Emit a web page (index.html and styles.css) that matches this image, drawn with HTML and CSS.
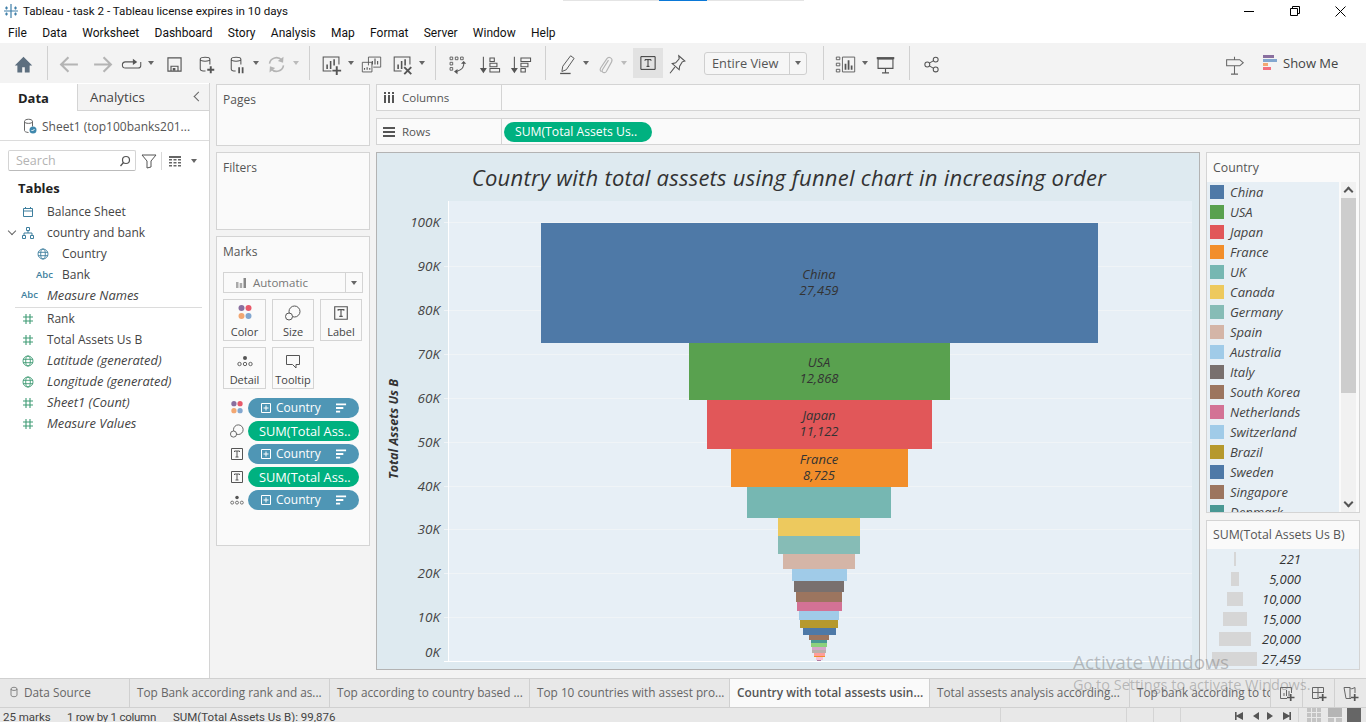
FILE: index.html
```html
<!DOCTYPE html>
<html lang="en">
<head>
<meta charset="utf-8">
<title>Tableau - task 2</title>
<link rel="stylesheet" href="styles.css">
</head>
<body>
<svg class="defs" aria-hidden="true">
  <symbol id="home" viewBox="0 0 24 24"><path fill="currentColor" d="M12 3 2 13h3v8h5.500v-6h3v6H19v-8h3z"/></symbol>
  <symbol id="back" viewBox="2 2 20 20"><path fill="none" stroke="currentColor" stroke-width="2" d="M20 12H4M11 5l-7 7 7 7"/></symbol>
  <symbol id="fwd" viewBox="2 2 20 20"><path fill="none" stroke="currentColor" stroke-width="2" d="M4 12h16M13 5l7 7-7 7"/></symbol>
  <symbol id="redo" viewBox="0 0 24 24"><path fill="none" stroke="currentColor" stroke-width="1.200" d="M14 9H4.500a3 3 0 0 0 0 7H19a3 3 0 0 0 3-3v-4"/><path fill="currentColor" d="M13 5.500 18 9l-5 3.500z"/></symbol>
  <symbol id="save" viewBox="0 0 24 24"><path fill="none" stroke="currentColor" stroke-width="1.300" d="M4.500 4.500h15v15h-15zM8 19v-5h8v5"/><path fill="currentColor" d="M10 16h3v3h-3z"/></symbol>
  <symbol id="dbadd" viewBox="0 0 24 24"><path fill="none" stroke="currentColor" stroke-width="1.200" d="M6 6c0-3 11-3 11 0v6M6 6c0 3 11 3 11 0M6 6v11c0 1.500 3 2.500 6 2.500"/><path fill="none" stroke="currentColor" stroke-width="2.200" d="M14 18h8M18 14v8"/></symbol>
  <symbol id="dbpause" viewBox="0 0 24 24"><path fill="none" stroke="currentColor" stroke-width="1.200" d="M6 6c0-3 11-3 11 0v6M6 6c0 3 11 3 11 0M6 6v11c0 1.500 2 2.500 5 2.500"/><path fill="none" stroke="currentColor" stroke-width="2" d="M15 15v7M19 15v7"/></symbol>
  <symbol id="refresh" viewBox="0 0 24 24"><path fill="none" stroke="currentColor" stroke-width="1.800" d="M4 11a8 8 0 0 1 14-4M20 13a8 8 0 0 1-14 4"/><path fill="currentColor" d="m20 3-.500 7-6-2zM4 21l.500-7 6 2z"/></symbol>
  <symbol id="sheetadd" viewBox="0 0 24 24"><path fill="none" stroke="currentColor" stroke-width="1.200" d="M12 19.500H2.500v-16h18V12"/><path fill="none" stroke="currentColor" stroke-width="1.800" d="M7 17v-5M11 17V8M15 13V6"/><path fill="none" stroke="currentColor" stroke-width="2.200" d="M13 19h10M18 14v10"/></symbol>
  <symbol id="sheetdup" viewBox="0 0 24 24"><path fill="none" stroke="currentColor" stroke-width="1" d="M8.500 13V3.500h14V15H14M1.500 9.500h11v11h-11z"/><path fill="none" stroke="currentColor" stroke-width="1.300" d="M13 12V8M16 12V5M19 12V8M4 18v-2M7 18v-3M10 18v-2"/></symbol>
  <symbol id="sheetx" viewBox="0 0 24 24"><path fill="none" stroke="currentColor" stroke-width="1.200" d="M11 19.500H2.500v-16h18V12"/><path fill="none" stroke="currentColor" stroke-width="1.800" d="M7 17v-5M11 17V8M15 13V6"/><path fill="none" stroke="currentColor" stroke-width="2.200" d="m14 15 8 8M22 15l-8 8"/></symbol>
  <symbol id="swap" viewBox="0 0 24 24"><g fill="none" stroke="currentColor" stroke-width="1"><path d="M3.500 3.500h3v3h-3zM9.500 3.500h3v3h-3zM15.500 3.500h3v3h-3zM3.500 9.500h3v3h-3zM3.500 15.500h3v3h-3z"/><path stroke-width="1.200" d="M19 9c1 5-1 9-8 11"/></g><path fill="currentColor" d="m16 11 3-3 3 3zM12 17v6l-4-3z"/></symbol>
  <symbol id="sortasc" viewBox="0 0 24 24"><path fill="none" stroke="currentColor" stroke-width="1.200" d="M5 3v16M12.500 4.500h5v4h-5zM12.500 10.500h8v4h-8zM12.500 16.500h11v4h-11z"/><path fill="currentColor" d="M1 16h8l-4 6z"/></symbol>
  <symbol id="sortdesc" viewBox="0 0 24 24"><path fill="none" stroke="currentColor" stroke-width="1.200" d="M5 3v16M12.500 4.500h11v4h-11zM12.500 10.500h8v4h-8zM12.500 16.500h5v4h-5z"/><path fill="currentColor" d="M1 16h8l-4 6z"/></symbol>
  <symbol id="pen" viewBox="0 0 24 24"><path fill="none" stroke="currentColor" stroke-width="1.100" d="m15 2 4 3-9 13-5 2 1-6z"/><path fill="currentColor" d="M3 21.500h12V23H3z"/></symbol>
  <symbol id="clip" viewBox="0 0 24 24"><path fill="none" stroke="currentColor" stroke-width="1.300" d="m16 7-7 11c-1.500 3 3 4.500 4.500 2l6-11c2-4-3-7-5.500-3.500L7 16c-1.500 3 .500 4 1 4"/></symbol>
  <symbol id="tbox" viewBox="0 0 24 24"><path fill="none" stroke="currentColor" stroke-width="1.300" d="M2.500 3.500h19v17h-19z"/><path fill="none" stroke="currentColor" stroke-width="1.300" d="M8 9V7.500h8V9M12 7.500v9M10 16.500h4"/></symbol>
  <symbol id="pin" viewBox="0 0 24 24"><path fill="none" stroke="currentColor" stroke-width="1.200" d="m14 2 7 6-3 1-3 5-.500 4-8-7 4-1 4-4.500zM9.500 15 4 22"/></symbol>
  <symbol id="showme" viewBox="0 0 24 24"><g fill="none" stroke="currentColor" stroke-width="1"><path d="M1.500 3.500h4v3h-4zM1.500 10.500h4v3h-4zM1.500 17.500h4v3h-4zM8.500 3.500h14v17h-14z"/></g><path fill="currentColor" d="M11 11h2v7h-2zM14.500 7h2v11h-2zM18 13h2v5h-2z"/></symbol>
  <symbol id="present" viewBox="0 0 24 24"><path fill="none" stroke="currentColor" stroke-width="1.300" d="M3.500 5.500h17v11h-17zM12 16.500v5M8 21.500h8"/><path fill="currentColor" d="M2 3.500h20V6H2z"/></symbol>
  <symbol id="share" viewBox="-3 -3 30 30"><g fill="none" stroke="currentColor" stroke-width="1.500"><circle cx="6" cy="12" r="3.500"/><circle cx="18" cy="5" r="3.500"/><circle cx="18" cy="19" r="3.500"/><path d="m9 10 6-3.500M9 14l6 3.500"/></g></symbol>
  <symbol id="sign" viewBox="0 0 24 24"><path fill="none" stroke="currentColor" stroke-width="1.200" d="M3 6.500h15l4 3.500-4 3.500H3zM12 3v3.500M12 13.500V23M8 23h8"/></symbol>
  <symbol id="bars" viewBox="0 0 16 16"><path fill="#8a6f9f" d="M1 0h11v3H1z"/><path fill="#83a7cf" d="M1 4h14v3H1z"/><path fill="#f2a772" d="M1 8h5v3H1z"/><path fill="#f2707f" d="M1 12h8v3H1z"/></symbol>
  <symbol id="dbok" viewBox="0 0 16 16"><path fill="none" stroke="#666" d="M2.500 3.500c0-3 8-3 8 0v5M2.500 3.500c0 2.500 8 2.500 8 0M2.500 3.500v9c0 1 1.500 1.800 4 2"/><circle cx="11" cy="12" r="3.500" fill="#3f88ad"/><path fill="none" stroke="#fff" d="m9.500 12 1 1 2-2"/></symbol>
  <symbol id="db" viewBox="0 0 16 16"><path fill="none" stroke="#666" d="M4 4c0-3 8-3 8 0v8c0 3-8 3-8 0zM4 4c0 2.500 8 2.500 8 0"/></symbol>
  <symbol id="funnel" viewBox="0 0 16 16"><path fill="none" stroke="#555" d="M1 2h14L10 8v6l-4 1V8z"/></symbol>
  <symbol id="lens" viewBox="0 0 12 12"><circle cx="7" cy="5" r="3.500" fill="none" stroke="#555" stroke-width="1.200"/><path stroke="#555" stroke-width="1.300" d="M4.500 7.500 1.500 11"/></symbol>
  <symbol id="cols" viewBox="0 0 14 12"><path fill="#666" d="M1 1h12v2H1zM1 4h3v1.500H1zM5.500 4h3v1.500h-3zM10 4h3v1.500h-3zM1 7h3v1.500H1zM5.500 7h3v1.500h-3zM10 7h3v1.500h-3zM1 10h3v1.500H1zM5.500 10h3v1.500h-3zM10 10h3v1.500h-3z"/></symbol>
  <symbol id="shcols" viewBox="0 0 12 11"><path fill="#555" d="M1 0h2v2H1zM5 0h2v2H5zM9 0h2v2H9zM1 3h2v8H1zM5 3h2v8H5zM9 3h2v8H9z"/></symbol>
  <symbol id="cal" viewBox="0 0 12 12"><path fill="none" stroke="#3e7f9e" d="M1.500 2.500h9v8h-9zM1.500 5h9M3.500 1v2M8.500 1v2"/></symbol>
  <symbol id="tree" viewBox="0 0 12 12"><path fill="none" stroke="#3e7f9e" d="M4.500 .5h3v3h-3zM.5 8.500h3v3h-3zM8.500 8.500h3v3h-3zM6 3.500V6M2 8.500V6h8v2.500"/></symbol>
  <symbol id="globe" viewBox="0 0 12 12"><g fill="none" stroke="currentColor" stroke-width=".9"><circle cx="6" cy="6" r="5"/><ellipse cx="6" cy="6" rx="2.300" ry="5"/><path d="M1 4.300h10M1 7.700h10"/></g></symbol>
  <symbol id="hash" viewBox="0 0 10 10"><path fill="none" stroke="#3f9b74" stroke-width="1.100" d="M3 0v10M7 0v10M0 3h10M0 7h10"/></symbol>
  <symbol id="dots" viewBox="0 0 16 16"><path fill="#8a6f9f" d="M4.500 0a3 3 0 1 0 0 6 3 3 0 0 0 0-6z"/><path fill="#e8596a" d="M11.500 0a3 3 0 1 0 0 6 3 3 0 0 0 0-6z"/><path fill="#f2a772" d="M4.500 8a3 3 0 1 0 0 6 3 3 0 0 0 0-6z"/><path fill="#83a7cf" d="M11.500 8a3 3 0 1 0 0 6 3 3 0 0 0 0-6z"/></symbol>
  <symbol id="size" viewBox="0 0 16 16"><g fill="none" stroke="#555"><circle cx="9.500" cy="6.500" r="5.500"/><circle cx="4" cy="11.500" r="3.500" fill="#fafafa"/></g></symbol>
  <symbol id="detail" viewBox="0 0 16 16"><g fill="none" stroke="#555" stroke-width=".9"><circle cx="2.500" cy="11" r="1.700"/><circle cx="8" cy="11" r="1.700"/><circle cx="13.500" cy="11" r="1.700"/></g><circle cx="8" cy="5" r="2" fill="#555"/></symbol>
  <symbol id="tip" viewBox="0 0 16 16"><path fill="none" stroke="#555" d="M1.500 2.500h13v9H11V15l-3.500-3.500h-6z"/></symbol>
  <symbol id="t" viewBox="0 0 14 14"><path fill="none" stroke="#555" d="M1.500 1.500h11v11h-11z"/><path fill="none" stroke="#555" d="M4.500 5V4h5v1M7 4v6M5.500 10h3"/></symbol>
  <symbol id="autobars" viewBox="0 0 12 12"><path fill="#aaa" d="M1 5h2.500v6H1zM4.700 6h2.500v5H4.700z"/><path fill="#888" d="M8.500 1H11v10H8.500z"/></symbol>
  <symbol id="plusbox" viewBox="0 0 10 10"><path fill="none" stroke="#fff" d="M.5.500h9v9h-9zM5 2.500v5M2.500 5h5"/></symbol>
  <symbol id="sortpill" viewBox="0 0 12 12"><path fill="#fff" d="M0 1h11v2H0zM0 5h8v2H0zM0 9h4.500v2H0z"/></symbol>
  <symbol id="tabsheet" viewBox="0 0 16 16"><path fill="none" stroke="#666" d="M8 13.500H1.500v-11h11V8"/><path stroke="#666" d="M5 11V8M7.500 11V5M10 11V6"/><path stroke="#555" stroke-width="1.700" d="M8 12.500h7.500M11.700 9v7.500"/></symbol>
  <symbol id="tabdash" viewBox="0 0 16 16"><path fill="none" stroke="#666" d="M8 13.500H1.500v-11h11V8M1.500 7.500h11M7 2.500v11"/><path stroke="#555" stroke-width="1.700" d="M8 12.500h7.500M11.700 9v7.500"/></symbol>
  <symbol id="tabstory" viewBox="0 0 16 16"><path fill="none" stroke="#666" d="M8 13.500H3l-2-11h6l1.500 1.500 3.500-1.500V8M7 2.500v11"/><path stroke="#555" stroke-width="1.700" d="M8 12.500h7.500M11.700 9v7.500"/></symbol>
  <symbol id="gridview" viewBox="0 0 14 14"><path fill="#c3c3c3" d="M0 0h4v4H0zM5 0h4v4H5zM10 0h4v4h-4zM0 5h4v4H0zM5 5h4v4H5zM10 5h4v4h-4zM0 10h4v4H0zM5 10h4v4H5zM10 10h4v4h-4z"/></symbol>
  <symbol id="midview" viewBox="0 0 14 14"><path fill="#b5b5b5" d="M0 0h14v9H0z"/><path fill="#c3c3c3" d="M0 10h6v4H0zM8 10h6v4H8z"/></symbol>
</svg>

<header class="titlebar">
  <svg class="applogo" viewBox="0 0 16 16"><g stroke="#3f7fa8" stroke-width="1.200"><path d="M8 1v14M1 8h14"/><path d="M3.500 3.500v3M2 5h3M12.500 3.500v3M11 5h3M3.500 9.500v3M2 11h3M12.500 9.500v3M11 11h3"/></g></svg>
  <span class="apptitle">Tableau - task 2 - Tableau license expires in 10 days</span>
  <div class="winbtns">
    <svg class="winbtn" viewBox="0 0 46 21"><path stroke="#000" d="M16 10.500h10"/></svg>
    <svg class="winbtn" viewBox="0 0 46 21"><path fill="none" stroke="#000" d="M16.500 7.500h7v7h-7zM18.500 7.500v-2h7v7h-2"/></svg>
    <svg class="winbtn" viewBox="0 0 46 21"><path fill="none" stroke="#000" d="m15.500 5.500 10 10M25.500 5.500l-10 10"/></svg>
  </div>
</header>
<div class="progress"><span class="progress-on"></span></div>

<nav class="menubar">
  <span>File</span><span>Data</span><span>Worksheet</span><span>Dashboard</span><span>Story</span><span>Analysis</span><span>Map</span><span>Format</span><span>Server</span><span>Window</span><span>Help</span>
</nav>

<div class="toolbar">
  <svg class="ti home"><use href="#home"/></svg>
  <i class="sep"></i>
  <svg class="ti off"><use href="#back"/></svg>
  <svg class="ti off m2"><use href="#fwd"/></svg>
  <svg class="ti n"><use href="#redo"/></svg>
  <i class="car m1"></i>
  <svg class="ti m3"><use href="#save"/></svg>
  <svg class="ti"><use href="#dbadd"/></svg>
  <svg class="ti"><use href="#dbpause"/></svg>
  <i class="car"></i>
  <svg class="ti off"><use href="#refresh"/></svg>
  <i class="car off"></i>
  <i class="sep"></i>
  <svg class="ti"><use href="#sheetadd"/></svg>
  <i class="car"></i>
  <svg class="ti"><use href="#sheetdup"/></svg>
  <svg class="ti"><use href="#sheetx"/></svg>
  <i class="car"></i>
  <i class="sep"></i>
  <svg class="ti"><use href="#swap"/></svg>
  <svg class="ti m1"><use href="#sortasc"/></svg>
  <svg class="ti"><use href="#sortdesc"/></svg>
  <i class="sep s9"></i>
  <svg class="ti n m2"><use href="#pen"/></svg>
  <i class="car"></i>
  <svg class="ti n off"><use href="#clip"/></svg>
  <i class="car off m1"></i>
  <span class="tactive"><svg class="ti n"><use href="#tbox"/></svg></span>
  <svg class="ti n"><use href="#pin"/></svg>
  <div class="fit"><span class="fit-label">Entire View</span><span class="fit-drop"><i class="car"></i></span></div>
  <i class="sep s16"></i>
  <svg class="ti"><use href="#showme"/></svg>
  <i class="car"></i>
  <svg class="ti"><use href="#present"/></svg>
  <i class="sep"></i>
  <svg class="ti"><use href="#share"/></svg>
  <svg class="ti sign"><use href="#sign"/></svg>
  <div class="showme"><svg class="showme-ic"><use href="#bars"/></svg><span>Show Me</span></div>
</div>

<main class="workspace">
  <aside class="sidebar">
    <div class="sidetabs">
      <span class="sidetab on">Data</span>
      <span class="sidetab">Analytics<b class="collapse"></b></span>
    </div>
    <div class="source"><svg class="src-ic"><use href="#dbok"/></svg><span>Sheet1 (top100banks201...</span></div>
    <div class="searchrow">
      <div class="searchbox"><span>Search</span><svg class="lens"><use href="#lens"/></svg></div>
      <svg class="filt"><use href="#funnel"/></svg>
      <i class="vline"></i>
      <svg class="gridic"><use href="#cols"/></svg>
      <i class="car"></i>
    </div>
    <h2 class="tables">Tables</h2>
    <ul class="fields">
      <li><svg class="fi"><use href="#cal"/></svg>Balance Sheet</li>
      <li><b class="chev"></b><svg class="fi"><use href="#tree"/></svg>country and bank</li>
      <li class="ind"><svg class="fi blue"><use href="#globe"/></svg>Country</li>
      <li class="ind"><span class="abc">Abc</span>Bank</li>
      <li class="em"><span class="abc">Abc</span>Measure Names</li>
    </ul>
    <hr class="fieldsep">
    <ul class="fields">
      <li><svg class="fi hash"><use href="#hash"/></svg>Rank</li>
      <li><svg class="fi hash"><use href="#hash"/></svg>Total Assets Us B</li>
      <li class="em"><svg class="fi green"><use href="#globe"/></svg>Latitude (generated)</li>
      <li class="em"><svg class="fi green"><use href="#globe"/></svg>Longitude (generated)</li>
      <li class="em"><svg class="fi hash"><use href="#hash"/></svg>Sheet1 (Count)</li>
      <li class="em"><svg class="fi hash"><use href="#hash"/></svg>Measure Values</li>
    </ul>
  </aside>

  <section class="cards">
    <div class="card pages"><h3>Pages</h3></div>
    <div class="card filters"><h3>Filters</h3></div>
    <div class="card marks">
      <h3>Marks</h3>
      <div class="marktype"><svg class="autoic"><use href="#autobars"/></svg><span class="mt-label">Automatic</span><span class="mt-drop"><i class="car"></i></span></div>
      <div class="markgrid">
        <div class="mbtn"><svg><use href="#dots"/></svg>Color</div>
        <div class="mbtn"><svg><use href="#size"/></svg>Size</div>
        <div class="mbtn"><svg><use href="#t"/></svg>Label</div>
        <div class="mbtn"><svg><use href="#detail"/></svg>Detail</div>
        <div class="mbtn"><svg><use href="#tip"/></svg>Tooltip</div>
      </div>
      <div class="mrow"><svg class="mic"><use href="#dots"/></svg><span class="pill blue-p"><svg class="pb"><use href="#plusbox"/></svg>Country<svg class="ps"><use href="#sortpill"/></svg></span></div>
      <div class="mrow"><svg class="mic"><use href="#size"/></svg><span class="pill green-p">SUM(Total Ass..</span></div>
      <div class="mrow"><svg class="mic"><use href="#t"/></svg><span class="pill blue-p"><svg class="pb"><use href="#plusbox"/></svg>Country<svg class="ps"><use href="#sortpill"/></svg></span></div>
      <div class="mrow"><svg class="mic"><use href="#t"/></svg><span class="pill green-p">SUM(Total Ass..</span></div>
      <div class="mrow"><svg class="mic"><use href="#detail"/></svg><span class="pill blue-p"><svg class="pb"><use href="#plusbox"/></svg>Country<svg class="ps"><use href="#sortpill"/></svg></span></div>
    </div>
  </section>

  <section class="stage">
    <div class="shelf"><div class="shelf-head"><svg class="sh-ic"><use href="#shcols"/></svg>Columns</div></div>
    <div class="shelf"><div class="shelf-head"><span class="rows-ic"><i></i><i></i><i></i></span>Rows</div><span class="shelfpill">SUM(Total Assets Us..</span></div>
    <div class="lower">
      <div class="view">
        <div class="viewtitle">Country with total asssets using funnel chart in increasing order</div>
        <svg class="chart" viewBox="377 201 822 468">
          <rect class="plot" x="448" y="201" width="744" height="460"/>
          <g class="grid">
            <path d="M444 222.500H1192M444 266.500H1192M444 310.500H1192M444 354.500H1192M444 398.500H1192M444 442.500H1192M444 486.500H1192M444 529.500H1192M444 573.500H1192M444 617.500H1192"/>
            <path class="axis" d="M448.500 201V661M444 661.500H1192"/>
          </g>
          <g class="ticks">
            <text x="440" y="227">100K</text><text x="440" y="271">90K</text><text x="440" y="315">80K</text><text x="440" y="359">70K</text><text x="440" y="403">60K</text><text x="440" y="447">50K</text><text x="440" y="491">40K</text><text x="440" y="534">30K</text><text x="440" y="578">20K</text><text x="440" y="622">10K</text><text x="440" y="657">0K</text>
          </g>
          <text class="ytitle" transform="translate(398 429) rotate(-90)">Total Assets Us B</text>
          <g class="bars" shape-rendering="crispEdges">
            <rect x="541" y="223" width="557" height="120" fill="#4e79a7"/>
            <rect x="689" y="343" width="261" height="57" fill="#59a14f"/>
            <rect x="707" y="400" width="225" height="49" fill="#e15759"/>
            <rect x="731" y="449" width="177" height="38" fill="#f28e2b"/>
            <rect x="747" y="487" width="144" height="31" fill="#76b7b2"/>
            <rect x="778" y="518" width="82" height="18" fill="#edc95e"/>
            <rect x="778" y="536" width="82" height="18" fill="#86bcb6"/>
            <rect x="783" y="554" width="72" height="15" fill="#d4b5a7"/>
            <rect x="792" y="569" width="55" height="12" fill="#a0cbe8"/>
            <rect x="794" y="581" width="50" height="11" fill="#79706e"/>
            <rect x="796" y="592" width="46" height="10" fill="#9c755f"/>
            <rect x="797" y="602" width="45" height="9" fill="#d37295"/>
            <rect x="799" y="611" width="40" height="9" fill="#a0cbe8"/>
            <rect x="800" y="620" width="38" height="8" fill="#b6992d"/>
            <rect x="803" y="628" width="33" height="7" fill="#4e79a7"/>
            <rect x="809" y="635" width="20" height="5" fill="#9c755f"/>
            <rect x="811" y="640" width="16" height="3" fill="#499894"/>
            <rect x="811" y="643" width="16" height="4" fill="#8cd17d"/>
            <rect x="812" y="647" width="14" height="3" fill="#d4a6c8"/>
            <rect x="812" y="650" width="14" height="3" fill="#bab0ac"/>
            <rect x="814" y="653" width="11" height="3" fill="#ff9d9a"/>
            <rect x="814" y="656" width="11" height="1" fill="#f28e2b"/>
            <rect x="816" y="657" width="7" height="3" fill="#fabfd2"/>
            <rect x="817" y="660" width="4" height="1" fill="#b07aa1"/>
          </g>
          <g class="labels">
            <text x="819" y="279">China</text><text x="819" y="295">27,459</text>
            <text x="819" y="367">USA</text><text x="819" y="383">12,868</text>
            <text x="819" y="420">Japan</text><text x="819" y="436">11,122</text>
            <text x="819" y="464">France</text><text x="819" y="480">8,725</text>
          </g>
        </svg>
      </div>
      <div class="legends">
        <div class="legend colorleg">
          <h4>Country</h4>
          <div class="legbody">
            <ul class="leglist">
              <li><i class="sw" style="background:#4e79a7"></i>China</li>
              <li><i class="sw" style="background:#59a14f"></i>USA</li>
              <li><i class="sw" style="background:#e15759"></i>Japan</li>
              <li><i class="sw" style="background:#f28e2b"></i>France</li>
              <li><i class="sw" style="background:#76b7b2"></i>UK</li>
              <li><i class="sw" style="background:#edc95e"></i>Canada</li>
              <li><i class="sw" style="background:#86bcb6"></i>Germany</li>
              <li><i class="sw" style="background:#d4b5a7"></i>Spain</li>
              <li><i class="sw" style="background:#a0cbe8"></i>Australia</li>
              <li><i class="sw" style="background:#79706e"></i>Italy</li>
              <li><i class="sw" style="background:#9c755f"></i>South Korea</li>
              <li><i class="sw" style="background:#d37295"></i>Netherlands</li>
              <li><i class="sw" style="background:#a0cbe8"></i>Switzerland</li>
              <li><i class="sw" style="background:#b6992d"></i>Brazil</li>
              <li><i class="sw" style="background:#4e79a7"></i>Sweden</li>
              <li><i class="sw" style="background:#9c755f"></i>Singapore</li>
              <li><i class="sw" style="background:#499894"></i>Denmark</li>
            </ul>
            <div class="scroll"><b class="up"></b><span class="thumb"></span><b class="down"></b></div>
          </div>
        </div>
        <div class="legend sizeleg">
          <h4>SUM(Total Assets Us B)</h4>
          <ul class="sizelist">
            <li><span class="sb-wrap"><i class="sb" style="width:2px"></i></span><span class="sv">221</span></li>
            <li><span class="sb-wrap"><i class="sb" style="width:8px"></i></span><span class="sv">5,000</span></li>
            <li><span class="sb-wrap"><i class="sb" style="width:16px"></i></span><span class="sv">10,000</span></li>
            <li><span class="sb-wrap"><i class="sb" style="width:24px"></i></span><span class="sv">15,000</span></li>
            <li><span class="sb-wrap"><i class="sb" style="width:32px"></i></span><span class="sv">20,000</span></li>
            <li><span class="sb-wrap"><i class="sb" style="width:45px"></i></span><span class="sv">27,459</span></li>
          </ul>
        </div>
      </div>
    </div>
  </section>
</main>

<div class="tabbar">
  <div class="tabs">
    <span class="tab ds"><svg class="tab-db"><use href="#db"/></svg>Data Source</span>
    <span class="tab">Top Bank according rank and as...</span>
    <span class="tab">Top according to country based ...</span>
    <span class="tab">Top 10 countries with assest pro...</span>
    <span class="tab active">Country with total assests usin...</span>
    <span class="tab">Total assests analysis according...</span>
    <span class="tab">Top bank according to total assets</span>
  </div>
  <span class="tabbtn"><svg><use href="#tabsheet"/></svg></span>
  <span class="tabbtn"><svg><use href="#tabdash"/></svg></span>
  <span class="tabbtn"><svg><use href="#tabstory"/></svg></span>
</div>

<footer class="status">
  <span class="st a">25 marks</span>
  <span class="st b">1 row by 1 column</span>
  <span class="st c">SUM(Total Assets Us B): 99,876</span>
  <i class="stsep"></i><i class="stcell"></i><i class="stcell"></i><i class="stcell"></i>
  <div class="nav">
    <span class="n-first"></span><span class="n-prev"></span><span class="n-next"></span><span class="n-last"></span>
  </div>
  <div class="viewsw">
    <svg><use href="#gridview"/></svg>
    <svg><use href="#midview"/></svg>
    <b class="full"></b>
  </div>
</footer>

<div class="watermark"><p class="wm1">Activate Windows</p><p class="wm2">Go to Settings to activate Windows.</p></div>
</body>
</html>
```

FILE: styles.css
```css
* { box-sizing: border-box; }
html, body { margin: 0; padding: 0; }
body {
  width: 1366px; height: 722px; overflow: hidden;
  display: flex; flex-direction: column;
  font-family: "Open Sans", "Noto Sans", sans-serif;
  font-size: 12px; color: #444; background: #fff;
  position: relative;
}
.defs { position: absolute; width: 0; height: 0; overflow: hidden; }
ul { list-style: none; margin: 0; padding: 0; }
h2, h3, h4, p { margin: 0; font-weight: normal; }
i, b { display: block; }

.titlebar { height: 22px; display: flex; align-items: center; background: #fff; flex: none; }
.applogo { width: 16px; height: 16px; margin: 0 0 0 3px; }
.apptitle { margin-left: 4px; font-family: Roboto, sans-serif; font-size: 11.600px; color: #111; }
.winbtns { margin-left: auto; display: flex; }
.winbtn { width: 46px; height: 21px; }
.progress { position: absolute; left: 563px; top: 0; width: 241px; height: 1px; background: #e4e4e4; }
.progress-on { display: block; width: 48px; height: 1px; margin-left: 96px; background: #0a78d7; }

.menubar { height: 21px; flex: none; display: flex; align-items: center; padding-left: 8px; gap: 15.300px; font-family: Roboto, sans-serif; font-size: 12px; color: #111; background: #fff; }

.toolbar { height: 40px; flex: none; display: flex; align-items: center; padding-left: 8px; background: #f3f3f3; color: #555; }
.ti { width: 31px; height: 21px; margin-top: 2px; flex: none; color: #555; }
.ti.n { width: 28px; }
.ti.off { color: #b4b4b4; }
.ti.home { color: #5d6f7f; }
.car { width: 9px; height: 4px; flex: none; position: relative; }
.car::after { content: ""; position: absolute; left: 1px; top: 0; border: 3.5px solid transparent; border-top: 4px solid #666; border-bottom: 0; }
.car.off::after { border-top-color: #bbb; }
.sep { width: 1px; height: 34px; background: #d0d0d0; margin: 0 6px 0 8px; flex: none; }
.sep.s9 { margin-left: 9px; }
.sep.s16 { margin-left: 16px; }
.m1 { margin-left: 1px; }
.m2 { margin-left: 2px; }
.m3 { margin-left: 3px; }
.tactive { width: 30px; height: 30px; margin-left: 4px; background: #e2e2e2; display: flex; align-items: center; justify-content: center; flex: none; }
.tactive .ti { width: 20px; height: 18px; margin-top: 0; color: #333; }
.fit { margin-left: 13px; width: 103px; height: 23px; border: 1px solid #cfcfcf; border-radius: 3px; display: flex; align-items: center; background: #f6f6f6; flex: none; }
.fit-label { width: 84px; padding-left: 7px; font-size: 12.800px; color: #555; white-space: nowrap; }
.fit-drop { flex: 1; height: 100%; border-left: 1px solid #cfcfcf; display: flex; align-items: center; justify-content: center; }
.ti.sign { margin-left: auto; color: #666; }
.showme { display: flex; align-items: center; margin-left: 12px; width: 104px; font-size: 13px; color: #444; }
.showme-ic { width: 16px; height: 16px; margin-right: 5px; }

.workspace { height: 595px; flex: none; display: flex; background: #f3f3f3; }
.sidebar { width: 210px; flex: none; background: #fff; border-right: 1px solid #d4d4d4; }
.sidetabs { height: 28px; margin-top: 1px; display: flex; }
.sidetab { height: 27px; display: flex; align-items: center; font-size: 13.300px; color: #444; background: #f3f3f3; border-bottom: 1px solid #d4d4d4; border-left: 1px solid #d4d4d4; flex: 1; padding-left: 12px; position: relative; }
.sidetab.on { flex: none; width: 77px; background: #fff; border: 0; font-size: 13px; font-weight: 700; color: #222; padding-left: 18px; }
.collapse { position: absolute; right: 7px; top: 9px; width: 7px; height: 7px; border-left: 1px solid #666; border-bottom: 1px solid #666; transform: rotate(45deg); }
.source { height: 29px; display: flex; align-items: center; padding-left: 22px; border-bottom: 1px solid #dcdcdc; color: #555; font-size: 12px; white-space: nowrap; }
.src-ic { width: 16px; height: 16px; margin-right: 4px; }
.searchrow { height: 21px; margin-top: 9px; display: flex; align-items: center; padding-left: 8px; }
.searchbox { width: 128px; height: 21px; border: 1px solid #d4d4d4; border-bottom-color: #bbb; border-radius: 2px; display: flex; align-items: center; justify-content: space-between; padding: 0 4px 0 7px; color: #b3b3b3; font-size: 12.500px; }
.lens { width: 12px; height: 12px; }
.filt { width: 16px; height: 16px; margin-left: 5px; }
.vline { width: 1px; height: 18px; background: #d8d8d8; margin-left: 4px; }
.gridic { width: 14px; height: 12px; margin: 0 8px 0 6px; }
.tables { margin: 7px 0 2px 18px; height: 21px; line-height: 21px; font-size: 13px; font-weight: 700; color: #222; }
.fields li { height: 21px; display: flex; align-items: center; padding-left: 47px; color: #444; font-size: 12px; position: relative; white-space: nowrap; }
.fields li.ind { padding-left: 62px; }
.fields li.em { font-style: italic; font-size: 12.900px; padding-bottom: 2px; }
.fi { position: absolute; left: 22px; top: 5px; width: 12px; height: 12px; }
.ind .fi { left: 37px; }
.fi.blue { color: #3e7f9e; }
.fi.green { color: #3f9b74; }
.fi.hash { width: 10px; height: 10px; left: 23px; top: 6px; }
.abc { position: absolute; left: 21px; font-size: 9.500px; font-weight: 600; font-style: normal; color: #3e7f9e; }
.ind .abc { left: 36px; }
.chev { position: absolute; left: 9px; top: 6px; width: 6px; height: 6px; border-right: 1px solid #666; border-bottom: 1px solid #666; transform: rotate(45deg); }
.fieldsep { margin: 1px 7px 0 15px; height: 1px; border: 0; background: #dcdcdc; }

.cards { width: 154px; margin: 1px 0 0 6px; flex: none; display: flex; flex-direction: column; gap: 6px; }
.card { border: 1px solid #d4d4d4; background: #fafafa; padding: 7px 6px 0; }
.card h3 { font-size: 12px; color: #555; line-height: 16px; }
.pages { height: 62px; }
.filters { height: 78px; }
.marks { height: 310px; }
.marktype { height: 21px; margin-top: 12px; border: 1px solid #d4d4d4; display: flex; align-items: center; width: 140px; }
.autoic { width: 12px; height: 12px; margin-left: 11px; }
.mt-label { margin-left: 6px; font-size: 11.500px; color: #777; width: 92px; }
.mt-drop { flex: 1; height: 100%; border-left: 1px solid #d4d4d4; display: flex; align-items: center; justify-content: center; }
.markgrid { margin-top: 6px; display: grid; grid-template-columns: 43px 42px 42px; grid-auto-rows: 42px; column-gap: 6px; row-gap: 6px; }
.mbtn { border: 1px solid #d4d4d4; display: flex; flex-direction: column; align-items: center; font-size: 11px; color: #444; padding-top: 5px; line-height: 16px; white-space: nowrap; }
.mbtn svg { width: 16px; height: 16px; margin-bottom: 3px; }
.mrow { height: 20px; margin-top: 3px; display: flex; align-items: center; }
.markgrid + .mrow { margin-top: 9px; }
.mic { width: 14px; height: 14px; margin-left: 7px; flex: none; }
.pill { margin-left: 4px; width: 111px; height: 20px; border-radius: 10px; color: #fff; font-size: 12px; display: flex; align-items: center; white-space: nowrap; padding-bottom: 1px; }
.blue-p { background: #4f96b5; padding-left: 13px; }
.green-p { background: #00b180; padding-left: 11px; font-size: 12.800px; }
.pb { width: 10px; height: 10px; margin-right: 5px; }
.ps { width: 11px; height: 12px; margin-left: auto; margin-right: 12px; }

.stage { width: 984px; margin: 1px 0 0 6px; flex: none; display: flex; flex-direction: column; gap: 7px; }
.shelf { height: 27px; border: 1px solid #d4d4d4; background: #fafafa; display: flex; align-items: center; }
.shelf-head { width: 125px; height: 100%; border-right: 1px solid #d4d4d4; display: flex; align-items: center; padding-left: 6px; color: #555; font-size: 11.500px; }
.sh-ic { width: 12px; height: 11px; margin-right: 7px; }
.rows-ic { width: 12px; margin-right: 7px; display: flex; flex-direction: column; gap: 2px; }
.rows-ic i { height: 2px; background: #555; }
.shelfpill { margin-left: 2px; width: 148px; height: 20px; border-radius: 10px; background: #00b180; color: #fff; font-size: 12.200px; padding-left: 11px; line-height: 20px; white-space: nowrap; }
.lower { display: flex; gap: 6px; height: 518px; }
.view { width: 824px; border: 1px solid #b3b3b3; background: #deeaf0; display: flex; flex-direction: column; }
.viewtitle { height: 48px; line-height: 48px; text-align: center; padding-left: 2px; font-size: 22px; letter-spacing: .25px; font-style: italic; color: #333; white-space: nowrap; }
.chart { width: 822px; height: 468px; display: block; }
.plot { fill: #e7eff6; }
.grid path { stroke: #f0f4f7; stroke-width: 1; fill: none; }
.grid .axis { stroke: #fff; }
.ticks text { font-size: 13.500px; font-style: italic; fill: #444; text-anchor: end; }
.ytitle { font-size: 12.500px; font-weight: 700; font-style: italic; fill: #333; text-anchor: middle; }
.labels text { font-size: 13px; font-style: italic; fill: #333; text-anchor: middle; }

.legends { width: 154px; flex: none; display: flex; flex-direction: column; gap: 7px; }
.legend { border: 1px solid #d4d4d4; background: #fafafa; }
.legend h4 { height: 29px; line-height: 29px; padding-left: 6px; font-size: 12.300px; color: #555; white-space: nowrap; }
.colorleg { height: 361px; overflow: hidden; }
.legbody { display: flex; height: 330px; overflow: hidden; }
.leglist { width: 132px; height: 330px; background: #e7eff5; overflow: hidden; flex: none; }
.leglist li { height: 20px; display: flex; align-items: center; padding-left: 3px; font-size: 13px; font-style: italic; color: #444; white-space: nowrap; }
.sw { width: 14px; height: 14px; margin-right: 6px; flex: none; }
.scroll { width: 15px; margin-left: 2px; position: relative; background: #f1f1f1; }
.thumb { display: block; position: absolute; top: 16px; left: 0; width: 15px; height: 195px; background: #cdcdcd; }
.up, .down { position: absolute; left: 4px; width: 7px; height: 7px; border-left: 2px solid #555; border-top: 2px solid #555; transform: rotate(45deg); }
.up { top: 6px; }
.down { bottom: 6px; transform: rotate(225deg); }
.sizeleg { height: 150px; }
.sizeleg h4 { height: 28px; line-height: 27px; }
.sizelist { height: 120px; background: #e7eff5; }
.sizelist li { height: 20px; display: flex; align-items: center; }
.sb-wrap { width: 55px; display: flex; justify-content: center; }
.sb { height: 14px; background: #d6d6d6; }
.sv { width: 39px; text-align: right; font-size: 13px; font-style: italic; color: #333; }

.tabbar { height: 30px; flex: none; display: flex; background: #e8e8e8; border-top: 1px solid #d0d0d0; border-bottom: 1px solid #d0d0d0; }
.tabs { width: 1270px; display: flex; overflow: hidden; flex: none; }
.tab { width: 200px; flex: none; display: flex; align-items: center; padding: 0 0 2px 7px; border-right: 1px solid #d0d0d0; font-size: 11.800px; color: #666; white-space: nowrap; overflow: hidden; }
.tab.ds { width: 130px; padding-left: 8px; }
.tab.active { background: #fafafa; font-weight: 600; color: #555; font-size: 11.900px; }
.tab-db { width: 12px; height: 14px; margin-right: 4px; }
.tabbtn { width: 32px; flex: none; border-left: 1px solid #d0d0d0; display: flex; align-items: center; justify-content: center; }
.tabbtn svg { width: 16px; height: 16px; }

.status { height: 14px; flex: none; background: #e8e8e8; display: flex; align-items: flex-start; font-family: Roboto, sans-serif; font-size: 11.500px; color: #444; overflow: hidden; white-space: nowrap; line-height: 14px; padding-top: 2px; }
.st { flex: none; }
.st.a { margin-left: 3px; width: 64px; }
.st.b { width: 106px; letter-spacing: -.25px; }
.st.c { width: 827px; }
.stsep, .stcell { width: 1px; height: 14px; margin-top: -2px; background: #d4d4d4; flex: none; }
.stcell { margin-left: 26px; }
.stcell:nth-of-type(2) { margin-left: 125px; }
.nav { display: flex; flex: none; margin-left: 54px; gap: 8px; width: 63px; margin-top: 2px; }
.nav span { width: 8px; height: 8px; background: #555; flex: none; }
.n-first { clip-path: polygon(0 0, 20% 0, 20% 45%, 100% 0, 100% 100%, 20% 55%, 20% 100%, 0 100%); }
.n-prev { clip-path: polygon(100% 0, 100% 100%, 25% 50%); }
.n-next { clip-path: polygon(0 0, 75% 50%, 0 100%); }
.n-last { clip-path: polygon(0 0, 80% 45%, 80% 0, 100% 0, 100% 100%, 80% 100%, 80% 55%, 0 100%); }
.viewsw { display: flex; flex: none; align-items: center; border-left: 1px solid #d4d4d4; padding-left: 8px; margin-top: -2px; height: 14px; }
.viewsw svg { width: 14px; height: 14px; flex: none; }
.viewsw svg + svg { margin: 0 5px 0 7px; }
.full { width: 14px; height: 14px; background: #666; flex: none; }

.watermark { position: absolute; left: 1073px; top: 650px; color: rgba(120, 120, 120, .45); pointer-events: none; white-space: nowrap; }
.wm1 { font-size: 19px; line-height: 25px; }
.wm2 { font-size: 14.500px; line-height: 18px; margin-top: 1px; }
```
